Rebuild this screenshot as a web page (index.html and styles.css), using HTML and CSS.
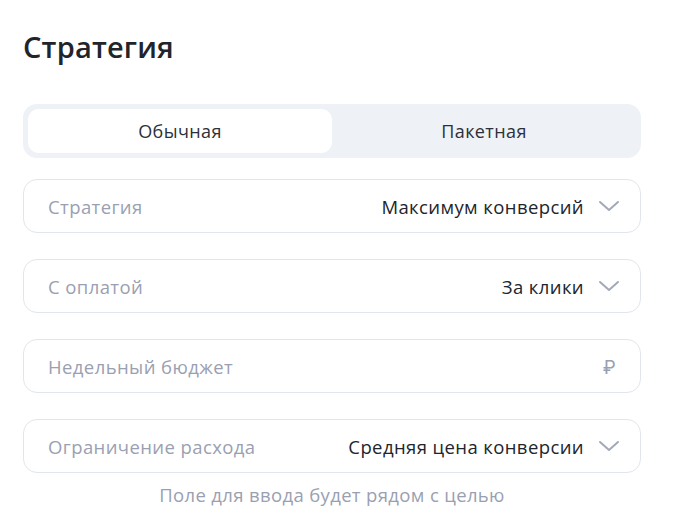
FILE: index.html
```html
<!DOCTYPE html>
<html lang="ru">
<head>
<meta charset="UTF-8">
<meta name="viewport" content="width=device-width, initial-scale=1.0">
<title>Стратегия</title>
<link rel="stylesheet" href="styles.css">
</head>
<body>
  <div class="panel">
    <h1>Стратегия</h1>

    <div class="tabs">
      <div class="tab active">Обычная</div>
      <div class="tab">Пакетная</div>
    </div>

    <div class="field">
      <span class="label">Стратегия</span>
      <span class="value">Максимум конверсий</span>
      <svg class="chevron" width="22" height="12" viewBox="0 0 22 12"><path d="M2 2l9 8 9-8" fill="none" stroke="currentColor" stroke-width="2" stroke-linecap="round" stroke-linejoin="round"/></svg>
    </div>

    <div class="field">
      <span class="label">С оплатой</span>
      <span class="value">За клики</span>
      <svg class="chevron" width="22" height="12" viewBox="0 0 22 12"><path d="M2 2l9 8 9-8" fill="none" stroke="currentColor" stroke-width="2" stroke-linecap="round" stroke-linejoin="round"/></svg>
    </div>

    <div class="field">
      <span class="label">Недельный бюджет</span>
      <span class="currency">₽</span>
    </div>

    <div class="field">
      <span class="label">Ограничение расхода</span>
      <span class="value">Средняя цена конверсии</span>
      <svg class="chevron" width="22" height="12" viewBox="0 0 22 12"><path d="M2 2l9 8 9-8" fill="none" stroke="currentColor" stroke-width="2" stroke-linecap="round" stroke-linejoin="round"/></svg>
    </div>
    <p class="hint">Поле для ввода будет рядом с целью</p>
  </div>
</body>
</html>
```
FILE: styles.css
```css
body {
  margin: 0;
  background: #fff;
  font-family: "Open Sans", Inter, sans-serif;
  color: #21252b;
}
.panel {
  width: 618px;
  padding: 26px 0 0 23px;
}
h1 {
  margin: 0 0 36px;
  font-size: 29px;
  font-weight: 600;
  letter-spacing: 0.2px;
  line-height: 42px;
}
.tabs {
  display: flex;
  background: #eef1f6;
  border-radius: 14px;
  padding: 5px;
  margin-bottom: 21px;
}
.tab {
  flex: 1;
  height: 44px;
  line-height: 44px;
  text-align: center;
  font-size: 18px;
  letter-spacing: 0.4px;
  border-radius: 11px;
  color: #2c3039;
}
.tab.active {
  background: #fff;
}
.field {
  display: flex;
  align-items: center;
  height: 52px;
  border: 1px solid #e3e5ee;
  border-radius: 14px;
  padding: 0 20px 0 24px;
  margin-bottom: 26px;
  font-size: 18.5px;
  letter-spacing: 0.4px;
}
.label {
  flex: 1;
  color: #9aa0b1;
}
.value {
  color: #21252b;
}
.chevron {
  margin-left: 14px;
  color: #a3a9ba;
}
.currency {
  color: #9aa0b1;
  margin-right: 4px;
}
.field:last-of-type {
  margin-bottom: 0;
}
.hint {
  margin: 9px 0 0;
  text-align: center;
  font-size: 18.5px;
  letter-spacing: 0.35px;
  color: #9aa0b1;
}
```
